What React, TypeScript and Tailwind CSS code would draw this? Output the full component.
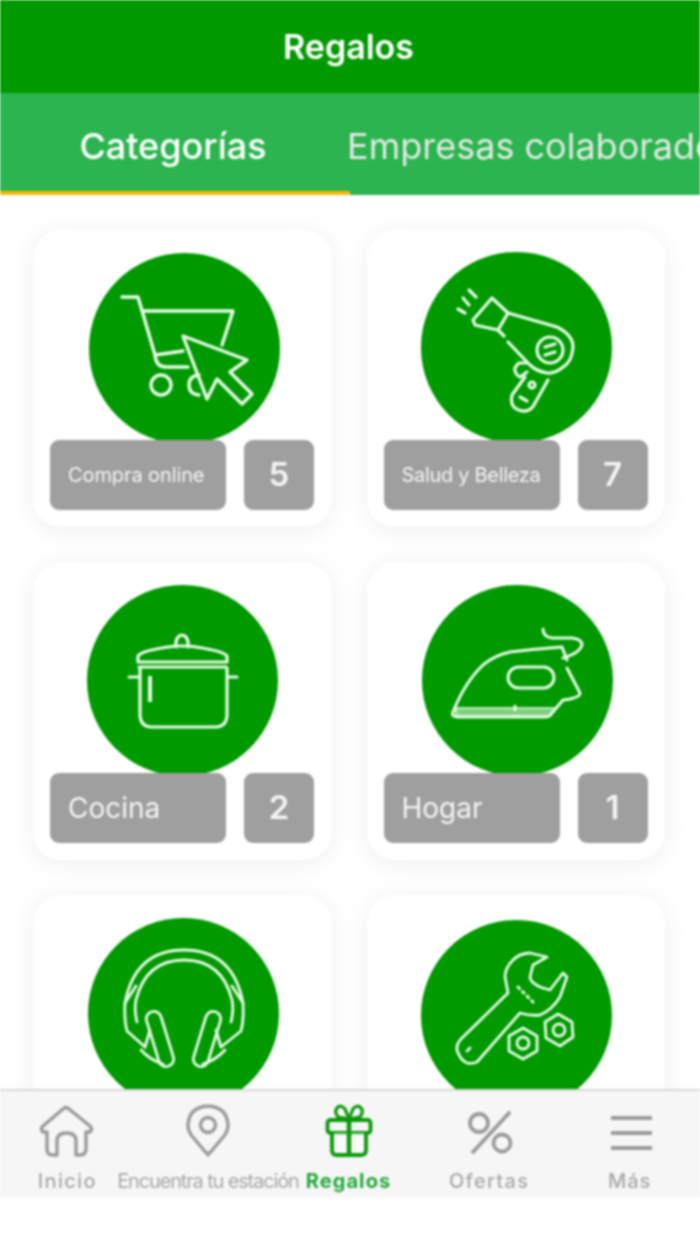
const INK = "#e6fbe6";

function Cart() {
  return (
    <svg viewBox="89 253 191 191" className="w-full h-full" fill="none" stroke={INK} strokeWidth="3.4" strokeLinejoin="round" strokeLinecap="round">
      <path d="M122 297H138L155 355L183 351" />
      <path d="M143 311H233L222 345" />
      <path d="M155 355Q156 367 166 367H188" />
      <circle cx="161" cy="385" r="10" />
      <path d="M199 375Q189 376 189 385Q189 394 199 395" />
      <path d="M183 336L247 360L230 372L252 394L242 404L217 379L207 399Z" />
    </svg>
  );
}
function Dryer() {
  return (
    <svg viewBox="421 252 191 191" className="w-full h-full" fill="none" stroke={INK} strokeWidth="3.2" strokeLinejoin="round" strokeLinecap="round">
      <path d="M458 309L465 313M463 298L469 305M469 290L476 297" />
      <path d="M492 298L508 313L498 330L475 325L473 320Z" />
      <path d="M508 313L557 327Q573 335 573 347Q572 362 563 367Q555 374 547 373Q536 371 530 365L508 342" />
      <path d="M498 330L504 336" />
      <circle cx="550" cy="350" r="13" />
      <path d="M545 347L555 344M545 355L555 352" />
      <path d="M527 363H519Q514 367 515 371Q517 376 520 377L527 372" />
      <path d="M525 377L512 395Q510 404 515 408Q522 413 529 410Q533 408 535 403L548 380" />
      <circle cx="532" cy="385" r="3" />
      <path d="M520 397L527 401" />
    </svg>
  );
}
function Pot() {
  return (
    <svg viewBox="87 585 191 191" className="w-full h-full" fill="none" stroke={INK} strokeWidth="3.2" strokeLinejoin="round" strokeLinecap="round">
      <path d="M176 647Q175 636 182 635Q189 636 188 647" />
      <path d="M138 662V656Q142 650 176 646H188Q222 650 227 656V662Z" />
      <path d="M139 667H226" />
      <path d="M140 668V714Q140 727 152 727H215Q227 727 227 714V668" />
      <path d="M129 677H139M228 677H237" />
      <path d="M150 676V702" strokeWidth="4" strokeLinecap="butt" />
    </svg>
  );
}
function Iron() {
  return (
    <svg viewBox="422 585 191 191" className="w-full h-full" fill="none" stroke={INK} strokeWidth="3" strokeLinejoin="round" strokeLinecap="round">
      <path d="M543 629Q543 637 552 638H572Q582 639 582 645Q580 653 563 658" />
      <path d="M567 668L580 693Q580 698 563 700L552 713Q550 717 545 717H458Q451 717 453 712Q465 682 483 665Q495 655 510 652Q535 649 562 647L567 660" />
      <path d="M456 708H557L552 714Q550 716 545 716H456Z" fill={INK} fillOpacity="0.55" strokeWidth="1.5" />
      <path d="M515 706V710" />
      <rect x="508" y="667" width="46" height="21" rx="10.5" />
    </svg>
  );
}
function Phones() {
  return (
    <svg viewBox="88 918 191 191" className="w-full h-full" fill="none" stroke={INK} strokeWidth="2.8" strokeLinejoin="round" strokeLinecap="round">
      <path d="M145 1047L127 1031Q124 1020 125 1003Q135 950 184 950Q233 950 243 1003Q244 1020 241 1031L221 1047" />
      <path d="M137 1022Q134 1010 136 1000Q146 960 184 960Q222 960 232 1000Q234 1010 231 1022" />
      <path d="M125 1003L136 986M243 1003L232 986" />
      <path d="M145 1047L150 1030M221 1047L216 1030" />
      <path d="M141 1050Q150 1060 163 1064M225 1050Q216 1060 203 1064" />
      <rect x="152.5" y="1010.5" width="15" height="57" rx="7.5" transform="rotate(-17 160 1039)" />
      <rect x="199.5" y="1010.5" width="15" height="57" rx="7.5" transform="rotate(17 207 1039)" />
    </svg>
  );
}
function Wrench() {
  return (
    <svg viewBox="421 920 191 191" className="w-full h-full" fill="none" stroke={INK} strokeWidth="2.8" strokeLinejoin="round" strokeLinecap="round">
      <path d="M547 957L530 953Q520 953 513 960Q505 968 505 977L508 993L460 1040Q456 1045 457 1050Q460 1060 467 1063Q472 1064 477 1062L520 1013Q530 1016 540 1015Q552 1010 560 997L567 977L563 973L550 990L540 987Q530 982 530 977L533 965Z" />
      <path d="M518 987L533 1002" strokeDasharray="2 4.5" strokeWidth="3" />
      <path d="M467 1051L470 1048" />
      <path d="M523 1028L537 1036V1051L523 1059L509 1051V1036Z" />
      <circle cx="523" cy="1043" r="6" />
      <path d="M545 1022L558 1014L572 1022L573 1037L560 1046L546 1038Z" />
      <circle cx="559" cy="1030" r="6" />
    </svg>
  );
}

const cards = [
  { label: "Compra online", n: "5", text: "text-[20px] tracking-[-0.1px]", Icon: Cart, pos: "ml-[56px] mt-[23px]" },
  { label: "Salud y Belleza", n: "7", text: "text-[20px] tracking-[-0.3px]", Icon: Dryer, pos: "ml-[54px] mt-[22px]" },
  { label: "Cocina", n: "2", text: "text-[28px]", Icon: Pot, pos: "ml-[54px] mt-[22px]" },
  { label: "Hogar", n: "1", text: "text-[28px]", Icon: Iron, pos: "ml-[55px] mt-[22px]" },
  { label: "", n: "", text: "text-[28px]", Icon: Phones, pos: "ml-[55px] mt-[23px]" },
  { label: "", n: "", text: "text-[28px]", Icon: Wrench, pos: "ml-[54px] mt-[25px]" },
];

function Card({ label, n, text, Icon, pos }: (typeof cards)[number]) {
  return (
    <div className="h-[297px] flex flex-col rounded-[28px] bg-white shadow-[0_3px_26px_rgba(0,0,0,0.07)]">
      <div className={`w-[191px] h-[191px] shrink-0 -mb-[30px] rounded-full bg-[#009900] ${pos}`}>
        <Icon />
      </div>
      <div className="relative mt-auto mb-[17px] mx-[17px] flex gap-[18px]">
        <div className={`h-[70px] w-[176px] rounded-[9px] bg-[#9f9f9f] pl-[18px] flex items-center text-[#f4f4f4] ${text}`}>
          {label}
        </div>
        <div className="h-[70px] w-[70px] rounded-[9px] bg-[#9f9f9f] flex items-center justify-center text-[33px] font-semibold text-[#f4f4f4]">
          {n}
        </div>
      </div>
    </div>
  );
}

function Home() {
  return (
    <svg viewBox="40 1105 56 54" className="w-[56px] h-[54px]" fill="none" stroke="#9b9b9b" strokeWidth="3.4" strokeLinejoin="round" strokeLinecap="round">
      <path d="M48 1133L44 1133Q41 1130 44 1127L64 1110Q67 1107 70 1110L91 1127Q94 1130 91 1133L87 1133V1150Q87 1156 81 1156H77V1142Q77 1134 67.5 1134Q58 1134 58 1142V1156H54Q48 1156 48 1150Z" />
    </svg>
  );
}
function Pin() {
  return (
    <svg viewBox="185 1104 44 54" className="w-[44px] h-[54px]" fill="none" stroke="#9b9b9b" strokeWidth="3.4" strokeLinejoin="round" strokeLinecap="round">
      <path d="M207 1155L191 1136Q187 1131 187 1125Q188 1107 207 1106Q226 1107 227 1125Q227 1131 223 1136Z" />
      <circle cx="207" cy="1125" r="7.5" />
    </svg>
  );
}
function Gift() {
  return (
    <svg viewBox="324 1104 50 54" className="w-[50px] h-[54px]" fill="none" stroke="#0a9a0a" strokeWidth="3.8" strokeLinejoin="round" strokeLinecap="round">
      <rect x="328.5" y="1120" width="43" height="13" rx="3" />
      <path d="M333 1133V1150Q333 1155 338 1155H362Q367 1155 367 1150V1133" fill="#ffffff" fillOpacity="0.6" />
      <path d="M350 1120V1155" strokeWidth="4.5" />
      <path d="M350 1119L339 1117Q335 1112 338 1108Q342 1104 346 1109Z" strokeWidth="3.2" />
      <path d="M350 1119L361 1117Q365 1112 362 1108Q358 1104 354 1109Z" strokeWidth="3.2" />
    </svg>
  );
}
function Percent() {
  return (
    <svg viewBox="464 1108 48 50" className="w-[48px] h-[50px]" fill="none" stroke="#9b9b9b" strokeWidth="3.8" strokeLinecap="round">
      <circle cx="478" cy="1123" r="9" />
      <circle cx="501" cy="1143" r="8.5" />
      <path d="M508 1113L472 1152" />
    </svg>
  );
}
function Menu() {
  return (
    <svg viewBox="606 1110 46 46" className="w-[46px] h-[46px]" fill="none" stroke="#9b9b9b" strokeWidth="4.2">
      <path d="M610 1116H651M610 1131H651M610 1146H651" />
    </svg>
  );
}

const nav = [
  { label: "Inicio", Icon: Home, cls: "tracking-[1.3px] text-[#a8a8a8] font-medium" },
  { label: "Encuentra tu estación", Icon: Pin, cls: "tracking-[-1.15px] text-[#a8a8a8]" },
  { label: "Regalos", Icon: Gift, cls: "tracking-[1.1px] font-bold text-[#22a93a]" },
  { label: "Ofertas", Icon: Percent, cls: "tracking-[1.3px] text-[#a8a8a8] font-medium" },
  { label: "Más", Icon: Menu, cls: "tracking-[1px] text-[#a8a8a8] font-medium" },
];

export default function App() {
  return (
    <div className="w-[700px] h-[1244px] overflow-hidden bg-white flex flex-col blur-[0.8px]" style={{ fontFamily: "Inter, 'Liberation Sans', sans-serif" }}>
      <header className="h-[93px] shrink-0 flex items-center justify-center pr-[3px] bg-[#009900] text-white text-[34px] font-semibold">
        Regalos
      </header>
      <nav className="h-[102px] shrink-0 flex bg-[#2bb44f] overflow-hidden">
        <div className="w-[350px] shrink-0 h-[102px] pt-[8px] pr-[4px] border-b-[4px] border-[#f5b80a] flex items-center justify-center text-[36px] font-medium text-white">
          Categorías
        </div>
        <div className="shrink-0 h-[102px] pt-[4px] -ml-[3px] flex items-center text-[36px] text-[#e4e9e4] whitespace-nowrap">
          Empresas colaboradoras
        </div>
      </nav>
      <main className="h-[894px] shrink-0 overflow-hidden">
        <div className="pt-[35px] pl-[33px] pr-[35px] grid grid-cols-2 gap-x-[35px] gap-y-[35.5px]">
          {cards.map((c, i) => (
            <Card key={i} {...c} />
          ))}
        </div>
      </main>
      <footer className="h-[108px] shrink-0 bg-[#f6f6f6] border-t-2 border-[#d9d9d9] overflow-hidden">
        <div className="-ml-[3px] w-[703px] grid grid-cols-5">
          {nav.map(({ label, Icon, cls }) => (
            <div key={label} className="flex flex-col items-center">
              <div className="h-[68px] flex items-end pb-[1px]">
                <Icon />
              </div>
              <span className={`mt-[10px] text-[20px] leading-[24px] whitespace-nowrap ${cls}`}>{label}</span>
            </div>
          ))}
        </div>
      </footer>
    </div>
  );
}
